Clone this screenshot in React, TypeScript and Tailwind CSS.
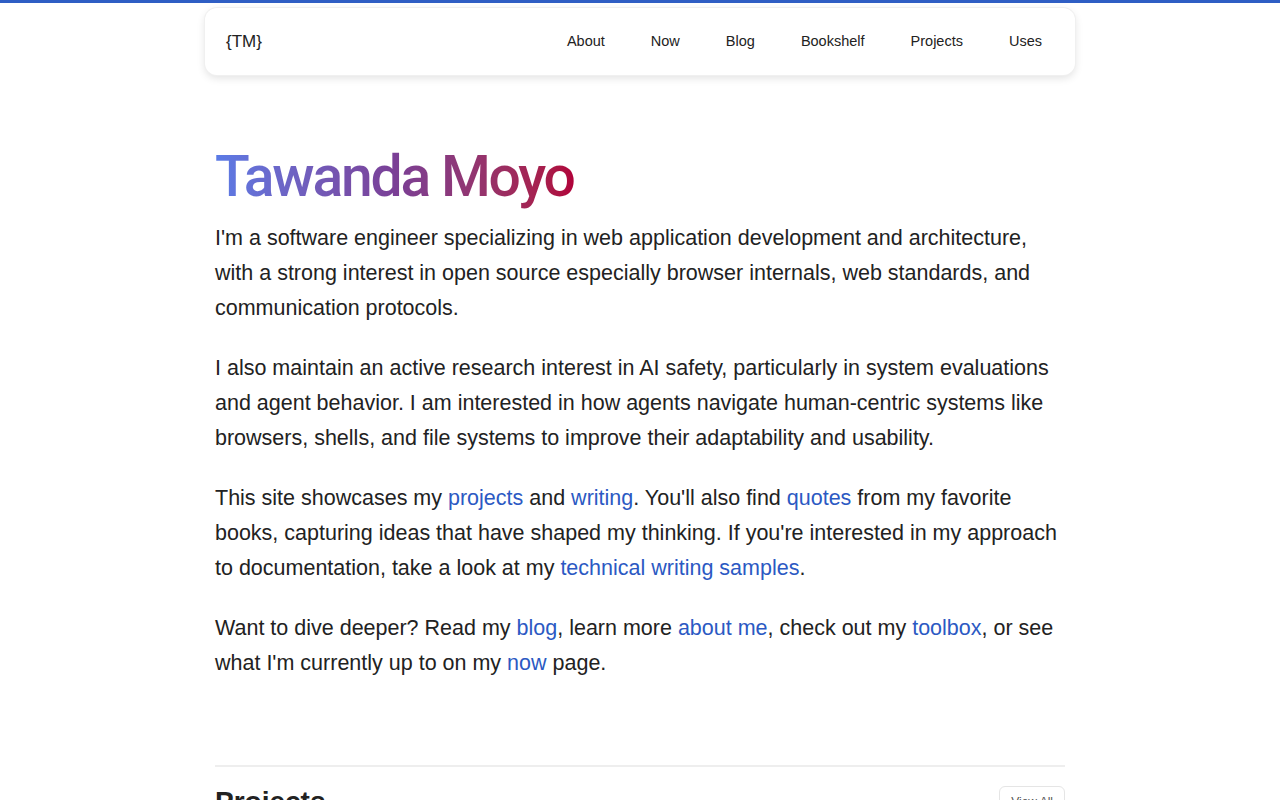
const links = ['About', 'Now', 'Blog', 'Bookshelf', 'Projects', 'Uses']

function A({ children }: { children: React.ReactNode }) {
  return (
    <a href="#" className="text-[#2b59c3] hover:underline">
      {children}
    </a>
  )
}

export default function App() {
  return (
    <div className="min-h-screen border-t-[3px] border-[#2f5ec4] bg-white font-['Liberation_Sans',Arial,sans-serif] text-[#222]">
      <header className="mx-auto mt-[5px] flex h-[67px] w-[870px] items-center justify-between rounded-xl bg-white pl-[21px] pr-[10px] shadow-[0_3px_8px_rgba(0,0,0,0.12)] ring-1 ring-[#f0f0f0]">
        <a href="#" className="text-[17px] text-[#222]">
          {'{TM}'}
        </a>
        <nav className="flex items-center">
          {links.map((label) => (
            <a key={label} href="#" className="px-[23px] text-[14.5px] text-[#222]">
              {label}
            </a>
          ))}
        </nav>
      </header>

      <main className="mx-auto w-[850px] pt-[62px]">
        <h1 className="inline-block bg-gradient-to-r from-[#5a7be6] via-[#7a3f96] to-[#b0003a] bg-clip-text pb-1 font-['Roboto',Arial,sans-serif] text-[57px] leading-[80px] font-medium tracking-[-2.2px] text-transparent">
          Tawanda Moyo
        </h1>
        <div className="text-[21.5px] leading-[35px]">
          <p className="mb-[25px]">
            I'm a software engineer specializing in web application development and architecture, with a strong
            interest in open source especially browser internals, web standards, and communication protocols.
          </p>
          <p className="mb-[25px]">
            I also maintain an active research interest in AI safety, particularly in system evaluations and agent
            behavior. I am interested in how agents navigate human-centric systems like browsers, shells, and file
            systems to improve their adaptability and usability.
          </p>
          <p className="mb-[25px]">
            This site showcases my <A>projects</A> and <A>writing</A>. You'll also find <A>quotes</A> from my
            favorite books, capturing ideas that have shaped my thinking. If you're interested in my approach to
            documentation, take a look at my <A>technical writing samples</A>.
          </p>
          <p>
            Want to dive deeper? Read my <A>blog</A>, learn more <A>about me</A>, check out my <A>toolbox</A>, or see
            what I'm currently up to on my <A>now</A> page.
          </p>
        </div>

        <section className="mt-[84px] border-t-2 border-[#eeeeee] pt-[14px]">
          <div className="flex items-start justify-between">
            <h2 className="text-[28px] font-bold text-[#222]">Projects</h2>
            <a href="#" className="mt-[5px] rounded-md border border-[#e5e5e5] px-[11px] py-[6px] text-[12px] text-[#555]">
              View All
            </a>
          </div>
        </section>
      </main>
    </div>
  )
}
